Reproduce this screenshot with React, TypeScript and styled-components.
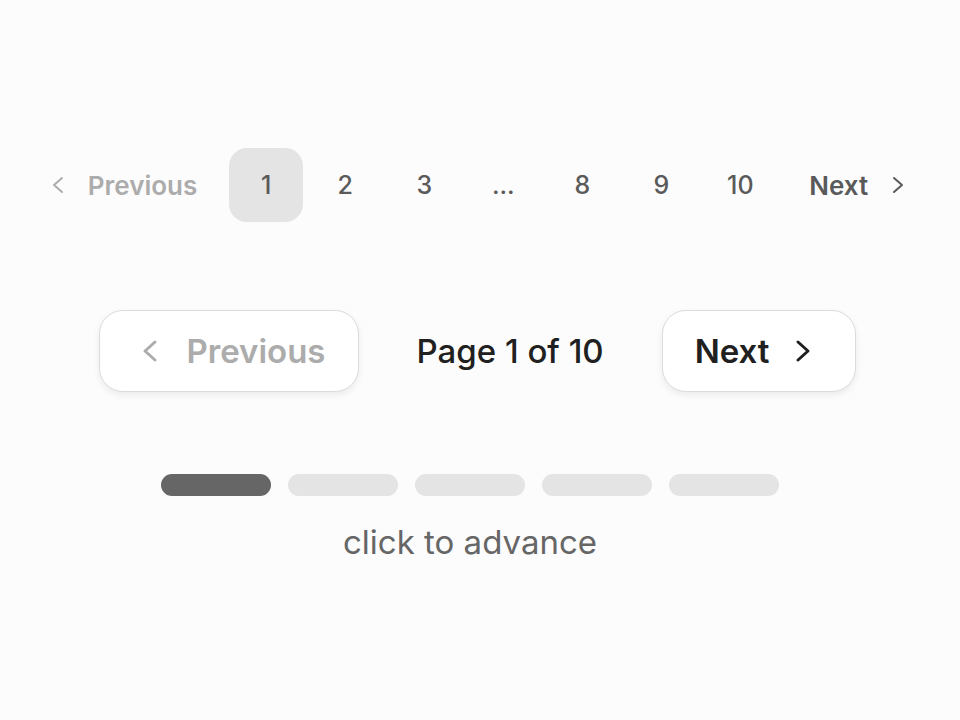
import React, { useState } from 'react'
import styled, { createGlobalStyle } from 'styled-components';

const GlobalStyle = createGlobalStyle`
    html, body {
        margin: 0;
        padding: 0;
        background-color: #fcfcfc;
        font-family: Inter, "Noto Sans", "Liberation Sans", sans-serif;
    }
`;

const Chevron = ({ dir, w, h, stroke }: { dir: 'left' | 'right'; w: number; h: number; stroke: number }) => {
    const pad = stroke;
    const d = dir === 'left'
        ? `M${w - pad} ${pad} L${pad} ${h / 2} L${w - pad} ${h - pad}`
        : `M${pad} ${pad} L${w - pad} ${h / 2} L${pad} ${h - pad}`;
    return (
        <svg width={w} height={h} viewBox={`0 0 ${w} ${h}`} fill="none">
            <path d={d} stroke="currentColor" strokeWidth={stroke} strokeLinecap="round" strokeLinejoin="round" />
        </svg>
    );
};

const pages = ['1', '2', '3', '...', '8', '9', '10'];

const App = () => {
    const [step, setStep] = useState(0);
    return (
        <>
            <GlobalStyle />
            <Container>
                <PageRow>
                    <EdgeLink muted>
                        <Chevron dir="left" w={12} h={18} stroke={2} />
                        <span>Previous</span>
                    </EdgeLink>
                    {pages.map((p, i) => (
                        <PageItem key={i} active={p === '1'}>{p}</PageItem>
                    ))}
                    <EdgeLink right>
                        <span>Next</span>
                        <Chevron dir="right" w={12} h={18} stroke={2} />
                    </EdgeLink>
                </PageRow>

                <ButtonRow>
                    <NavButton disabledLook iconLeft>
                        <Chevron dir="left" w={16} h={24} stroke={3} />
                        <span>Previous</span>
                    </NavButton>
                    <PageLabel>Page 1 of 10</PageLabel>
                    <NavButton>
                        <span>Next</span>
                        <Chevron dir="right" w={16} h={24} stroke={3} />
                    </NavButton>
                </ButtonRow>

                <Steps onClick={() => setStep((step + 1) % 5)}>
                    <Bars>
                        {[0, 1, 2, 3, 4].map((i) => (
                            <Bar key={i} active={i === step} />
                        ))}
                    </Bars>
                    <Hint>click to advance</Hint>
                </Steps>
            </Container>
        </>
    )
}

export default App;

const Container = styled.div`
    width: 960px;
    height: 720px;
    box-sizing: border-box;
    padding-top: 148px;
    display: flex;
    flex-direction: column;
    align-items: center;
`;
const PageRow = styled.div`
    display: flex;
    align-items: center;
    gap: 5px;
    margin-left: -4px;
`;
const EdgeLink = styled.div<{ muted?: boolean; right?: boolean }>`
    display: flex;
    align-items: center;
    gap: 24px;
    height: 74px;
    padding: ${p => p.right ? '0 0 0 27px' : '0 27px 0 0'};
    color: ${p => p.muted ? '#acacac' : '#5a5a5a'};
    font-size: 26px;
    font-weight: 600;
    cursor: pointer;
`;
const PageItem = styled.div<{ active?: boolean }>`
    width: 74px;
    height: 74px;
    border-radius: 18px;
    display: flex;
    align-items: center;
    justify-content: center;
    background-color: ${p => p.active ? '#e4e4e4' : 'transparent'};
    color: #5a5a5a;
    font-size: 25px;
    font-weight: 500;
    cursor: pointer;
`;
const ButtonRow = styled.div`
    margin-top: 88px;
    display: flex;
    align-items: center;
    gap: 58px;
    margin-left: -5px;
`;
const NavButton = styled.button<{ disabledLook?: boolean; iconLeft?: boolean }>`
    height: 82px;
    display: flex;
    align-items: center;
    gap: ${p => p.iconLeft ? '29px' : '26px'};
    padding: ${p => p.iconLeft ? '0 32px 0 42px' : '0 44px 0 32px'};
    background-color: #ffffff;
    border: 1.5px solid #dcdcdc;
    border-radius: 24px;
    box-shadow: 0 3px 7px rgba(0, 0, 0, 0.07);
    color: ${p => p.disabledLook ? '#acacac' : '#202020'};
    font-family: inherit;
    font-size: 33px;
    font-weight: 600;
    cursor: pointer;
`;
const PageLabel = styled.div`
    color: #202020;
    font-size: 33px;
    font-weight: 500;
`;
const Steps = styled.div`
    margin-top: 82px;
    display: flex;
    flex-direction: column;
    align-items: center;
    gap: 26px;
    margin-right: 20px;
    cursor: pointer;
`;
const Bars = styled.div`
    display: flex;
    gap: 17px;
`;
const Bar = styled.div<{ active?: boolean }>`
    width: 110px;
    height: 22px;
    border-radius: 11px;
    background-color: ${p => p.active ? '#666666' : '#e4e4e4'};
`;
const Hint = styled.div`
    color: #666666;
    font-size: 33px;
    font-weight: 400;
`;
